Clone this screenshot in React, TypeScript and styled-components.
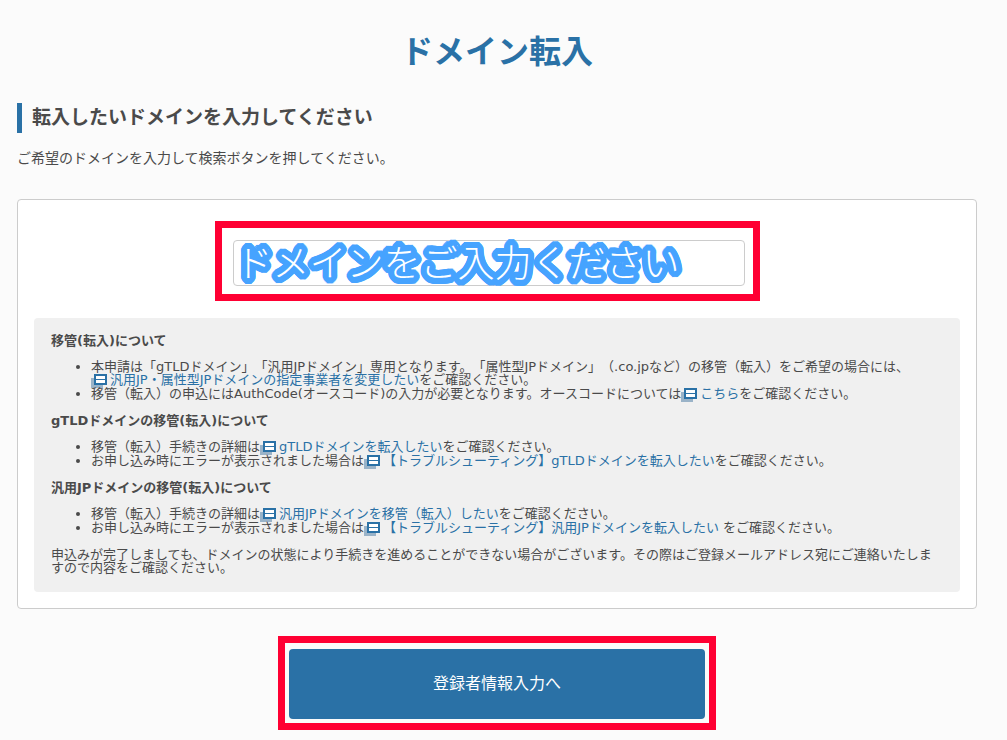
import React from "react";
import styled, { createGlobalStyle } from "styled-components";

const blue = "#2a71a6";
const red = "#ff0033";
const outlineBlue = "#46a3ff";

// Rounded outline: copies of the text set on a circle behind it.
const roundOutline = (radius: number, color: string) =>
  Array.from({ length: 32 }, (_, i) => {
    const angle = (i / 32) * 2 * Math.PI;
    return `${(radius * Math.cos(angle)).toFixed(2)}px ${(radius * Math.sin(angle)).toFixed(2)}px 0 ${color}`;
  }).join(", ");

const GlobalStyle = createGlobalStyle`
  *, *::before, *::after { box-sizing: border-box; }
  body {
    margin: 0;
    background: #fbfbfb;
    color: #4a4a4a;
    font-family: "DejaVu Sans", "Noto Sans CJK JP", sans-serif;
    font-size: 13px;
    line-height: 13px;
    text-spacing-trim: space-all;
  }
`;

const Page = styled.main`
  padding: 32px 30px 10px 17px;
`;

const Title = styled.h1`
  margin: 0;
  color: ${blue};
  font-size: 32px;
  line-height: 40px;
  text-align: center;
`;

const SectionTitle = styled.h2`
  margin: 31px 0 0;
  padding: 0 0 2px 10px;
  border-left: 5px solid ${blue};
  font-size: 19px;
  line-height: 28px;
`;

const Lead = styled.p`
  margin: 15px 0 31px;
  font-size: 14px;
  line-height: 20px;
`;

const Card = styled.section`
  padding: 21px 16px 16px;
  border: 1px solid #ccc;
  border-radius: 4px;
  background: #fff;
`;

const SearchRow = styled.div`
  display: flex;
  justify-content: center;
  padding-right: 20px;
  margin-bottom: 17px;
`;

const Highlight = styled.div<{ $pad: string }>`
  border: 7px solid ${red};
  padding: ${(p) => p.$pad};
`;

const Field = styled.div`
  position: relative;
  width: 512px;
  max-width: 100%;
`;

const DomainInput = styled.input`
  display: block;
  width: 100%;
  height: 46px;
  padding: 0 12px;
  border: 1px solid #ccc;
  border-radius: 4px;
  background: #fff;
  font: inherit;
  font-size: 16px;
`;

const FieldLabel = styled.label`
  position: absolute;
  top: 0;
  left: 3px;
  color: #fff;
  font-family: "Noto Sans CJK JP", sans-serif;
  font-size: 37px;
  font-weight: 300;
  line-height: 42px;
  white-space: nowrap;
  text-shadow: ${roundOutline(6, outlineBlue)}, ${roundOutline(3, outlineBlue)};
  pointer-events: none;
`;

const Notes = styled.div`
  padding: 16px 17px 18px;
  border-radius: 4px;
  background: #f0f0f0;
`;

const NotesTitle = styled.h3`
  margin: 0;
  font-size: 13px;
  line-height: 13px;
`;

const NotesList = styled.ul`
  margin: 13px 0;
  padding-left: 40px;
`;

const NotesItem = styled.li`
  padding-bottom: 1px;
`;

const NotesText = styled.p`
  margin: 0;
`;

const Link = styled.a`
  color: ${blue};
  text-decoration: none;
`;

const Icon = styled.svg`
  vertical-align: top;
  margin: 1px 3px -2px 0;
`;

const Actions = styled.div`
  display: flex;
  justify-content: center;
  margin-top: 27px;
`;

const SubmitButton = styled.button`
  display: block;
  width: 416px;
  max-width: 100%;
  height: 70px;
  padding: 0 0 2px;
  border: 0;
  border-radius: 4px;
  background: ${blue};
  color: #fff;
  font: inherit;
  font-size: 16px;
`;

function WindowLink({ children }: { children: React.ReactNode }) {
  return (
    <Link href="#">
      <Icon width="16" height="14" viewBox="0 0 16 14" shapeRendering="crispEdges" aria-hidden="true">
        <rect x="0" y="4" width="12" height="10" fill="#9ab3c8" />
        <rect x="3" y="0" width="13" height="11" fill={blue} />
        <rect x="5" y="2" width="9" height="3" fill="#fff" />
        <rect x="5" y="6" width="9" height="3" fill="#fff" />
      </Icon>
      {children}
    </Link>
  );
}

export default function App() {
  return (
    <>
      <GlobalStyle />
      <Page>
        <Title>ドメイン転入</Title>
        <SectionTitle>転入したいドメインを入力してください</SectionTitle>
        <Lead>ご希望のドメインを入力して検索ボタンを押してください。</Lead>
        <Card>
          <SearchRow>
            <Highlight $pad="12px 8px 8px 11px">
              <Field>
                <DomainInput id="domain" type="text" />
                <FieldLabel htmlFor="domain">ドメインをご入力ください</FieldLabel>
              </Field>
            </Highlight>
          </SearchRow>
          <Notes>
            <NotesTitle>移管(転入)について</NotesTitle>
            <NotesList>
              <NotesItem>
                本申請は「gTLDドメイン」「汎用JPドメイン」専用となります。「属性型JPドメイン」（.co.jpなど）の移管（転入）をご希望の場合には、
                <br />
                <WindowLink>汎用JP・属性型JPドメインの指定事業者を変更したい</WindowLink>をご確認ください。
              </NotesItem>
              <NotesItem>
                移管（転入）の申込にはAuthCode(オースコード)の入力が必要となります。オースコードについては
                <WindowLink>こちら</WindowLink>をご確認ください。
              </NotesItem>
            </NotesList>
            <NotesTitle>gTLDドメインの移管(転入)について</NotesTitle>
            <NotesList>
              <NotesItem>
                移管（転入）手続きの詳細は<WindowLink>gTLDドメインを転入したい</WindowLink>をご確認ください。
              </NotesItem>
              <NotesItem>
                お申し込み時にエラーが表示されました場合は
                <WindowLink>【トラブルシューティング】gTLDドメインを転入したい</WindowLink>をご確認ください。
              </NotesItem>
            </NotesList>
            <NotesTitle>汎用JPドメインの移管(転入)について</NotesTitle>
            <NotesList>
              <NotesItem>
                移管（転入）手続きの詳細は<WindowLink>汎用JPドメインを移管（転入）したい</WindowLink>をご確認ください。
              </NotesItem>
              <NotesItem>
                お申し込み時にエラーが表示されました場合は
                <WindowLink>【トラブルシューティング】汎用JPドメインを転入したい</WindowLink> をご確認ください。
              </NotesItem>
            </NotesList>
            <NotesText>
              申込みが完了しましても、ドメインの状態により手続きを進めることができない場合がございます。その際はご登録メールアドレス宛にご連絡いたしますので内容をご確認ください。
            </NotesText>
          </Notes>
        </Card>
        <Actions>
          <Highlight $pad="6px 4px 4px">
            <SubmitButton type="button">登録者情報入力へ</SubmitButton>
          </Highlight>
        </Actions>
      </Page>
    </>
  );
}
